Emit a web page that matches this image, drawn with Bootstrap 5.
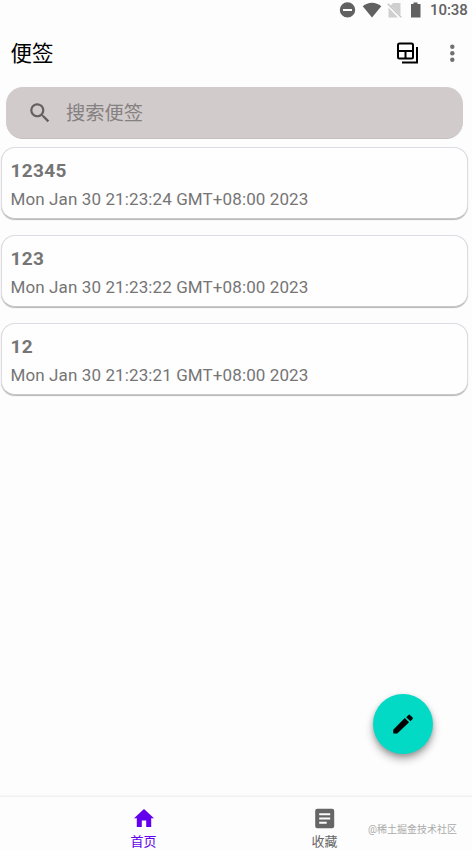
<!DOCTYPE html>
<html lang="zh-CN">
<head>
<meta charset="utf-8">
<meta name="viewport" content="width=device-width, initial-scale=1">
<title>便签</title>
<link href="https://cdn.jsdelivr.net/npm/bootstrap@5.3.0/dist/css/bootstrap.min.css" rel="stylesheet">
<style>
body{background:#fdfdfd;font-family:Roboto,"Noto Sans CJK SC",sans-serif;color:#000}
svg{display:block;flex:none}
.app{height:850px;width:472px}
.status{height:20px;padding-right:5px;color:#616161}
.clock{font-size:15px;line-height:22px;font-weight:500;margin-left:7px;width:37px;white-space:nowrap;letter-spacing:-.05px}
.toolbar{height:67px;padding:0 10px 0 10.5px}
.heading{font-size:21.5px;line-height:30px;font-weight:400;padding-top:1px}
.search{height:52px;margin:0 9px 0 6px;border-radius:17px;background:#d1cbcb;border-bottom:1px solid #c5c0c0;padding-left:21px}
.search-input{font-size:19.3px;line-height:28px;color:#868181;margin-left:13px;padding-top:2px}
.notes{padding:8px 4px 0 1px;gap:16px}
.note{height:72px;border-radius:14px;border:1px solid #dcdce2;border-bottom-color:#c8c8cc;background:#fefefe;box-shadow:0 1px 1px rgba(0,0,0,.28);padding:10px 8px 0 8.5px}
.note-title{font-size:19px;line-height:26px;font-weight:700;letter-spacing:.35px;color:#757575}
.note-date{font-size:17px;line-height:24px;margin-top:3px;color:#757575;white-space:nowrap;letter-spacing:.11px}
.fab{width:60px;height:60px;margin:0 39px 42px auto;background:#03dac5;color:#000;box-shadow:0 5px 8px rgba(0,0,0,.32),0 2px 4px rgba(0,0,0,.15)}
.tabs{height:54px;border-top:1px solid #f1f1f1;box-shadow:0 -1px 1px #f8f8f8;padding:9px 0 0 53px;color:#666}
.tab{width:181px;font-size:13px}
.tab span{line-height:20px;margin-top:1px}
.tab.active{color:#6200ee}
.mark-text{font-size:10px;line-height:16px;color:#aaa;white-space:nowrap;margin:16px 0 0 -47px}
</style>
<script src="https://cdn.jsdelivr.net/npm/bootstrap@5.3.0/dist/js/bootstrap.bundle.min.js" defer></script>
</head>
<body>
<div class="app d-flex flex-column overflow-hidden">
  <div class="status d-flex align-items-center justify-content-end">
    <svg width="86" height="20" viewBox="0 0 86 20" fill="currentColor">
      <path fill-rule="evenodd" d="M10.500 2.200a7.700 7.700 0 1 0 0 15.400a7.700 7.700 0 0 0 0-15.400zM6 9h9v2H6z"/>
      <path d="M25.700 6.300C31 1.600 39 1.600 44.300 6.300L35 17.500z"/>
      <path fill="#cfcfcf" d="M56 3h7.500v12L53.700 5.500zM51.500 7.500l9.500 10h-9.500z"/>
      <path d="M50.800 3.700L64.300 17.300" fill="none" stroke="#c4c4c4" stroke-width="1.500"/>
      <path d="M76.500 2.500h4V4h3v13.500H74V4h2.500z"/>
    </svg>
    <div class="clock">10:38</div>
  </div>
  <header class="toolbar d-flex align-items-center">
    <h1 class="heading mb-0 me-auto">便签</h1>
    <svg width="24" height="24" viewBox="0 0 24 24" fill="none" stroke="#000" stroke-width="2">
      <rect x="4" y="1.500" width="15" height="15" rx="1.500"/>
      <path d="M4 9h15M11.500 9v7.500M23 5V20.500H8"/>
    </svg>
    <svg class="ms-4" width="20" height="24" viewBox="0 0 20 24" fill="#707070"><circle cx="10.300" cy="4.700" r="2.200"/><circle cx="10.300" cy="11.200" r="2.200"/><circle cx="10.300" cy="17.700" r="2.200"/></svg>
  </header>
  <div class="search d-flex align-items-center flex-shrink-0">
    <svg width="26" height="26" viewBox="0 0 24 24" fill="#665f5f"><path d="M15.500 14h-.79l-.28-.27A6.500 6.500 0 1 0 13.730 14.430l.27.28v.79l5 4.990L20.490 19zM9.500 14a4.500 4.500 0 1 1 0-9a4.500 4.500 0 0 1 0 9z"/></svg>
    <div class="search-input">搜索便签</div>
  </div>
  <main class="notes d-flex flex-column">
    <article class="note"><div class="note-title">12345</div><div class="note-date">Mon Jan 30 21:23:24 GMT+08:00 2023</div></article>
    <article class="note"><div class="note-title">123</div><div class="note-date">Mon Jan 30 21:23:22 GMT+08:00 2023</div></article>
    <article class="note"><div class="note-title">12</div><div class="note-date">Mon Jan 30 21:23:21 GMT+08:00 2023</div></article>
  </main>
  <button class="fab border-0 rounded-circle mt-auto p-0 d-flex align-items-center justify-content-center flex-shrink-0" aria-label="edit">
    <svg width="26" height="26" viewBox="0 0 24 24"><path d="M3 17.200V20.800h3.700L17.600 10.400l-3.900-3.900zM20.900 7.300a1 1 0 0 0 0-1.200l-2.500-2.500a1 1 0 0 0-1.300 0l-2.100 2.100l3.800 3.800z"/></svg>
  </button>
  <nav class="tabs d-flex flex-shrink-0">
    <div class="tab active d-flex flex-column align-items-center"><svg width="24" height="25" viewBox="0 0 24 25" fill="currentColor"><path d="M9.800 21v-6.500h4.400V21h5v-8.700H22L12 3L2 12.300h2.800V21z"/></svg><span>首页</span></div>
    <div class="tab d-flex flex-column align-items-center"><svg width="24" height="25" viewBox="0 0 24 25" fill="currentColor"><path fill-rule="evenodd" d="M4.200 2.700h15q2 0 2 2v15.500q0 2-2 2h-15q-2 0-2-2V4.700q0-2 2-2zM6.200 7.200v2h11v-2zM6.200 11.400v2h11v-2zM6.200 15.700v2h7.500v-2z"/></svg><span>收藏</span></div>
    <div class="mark-text">@稀土掘金技术社区</div>
  </nav>
</div>
</body>
</html>
